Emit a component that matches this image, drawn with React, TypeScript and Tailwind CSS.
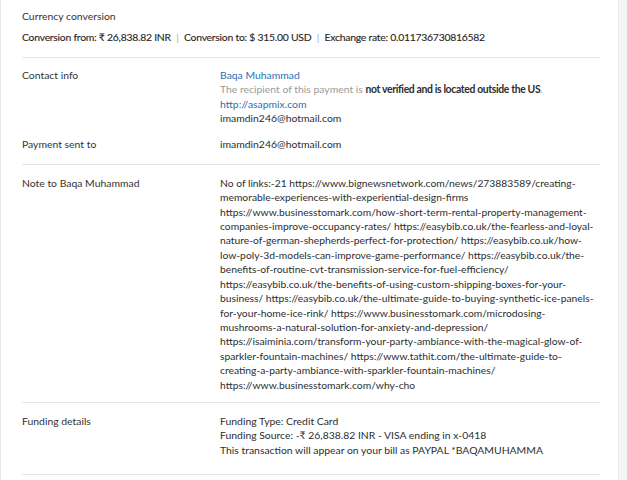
import React from "react";

const font = { fontFamily: "Lato, 'Noto Sans', sans-serif" };

function Divider() {
  return <div className="h-px bg-[#e5e5e5] mr-[18px]" />;
}

function Row({ label, children, className = "" }: { label: string; children: React.ReactNode; className?: string }) {
  return (
    <div className={`flex ${className}`}>
      <div className="w-[198px] shrink-0 text-[#333]">{label}</div>
      <div className="flex-1 text-[#2c2e2f]">{children}</div>
    </div>
  );
}

const noteLines = [
  "No of links:-21 https://www.bignewsnetwork.com/news/273883589/creating-",
  "memorable-experiences-with-experiential-design-firms",
  "https://www.businesstomark.com/how-short-term-rental-property-management-",
  "companies-improve-occupancy-rates/ https://easybib.co.uk/the-fearless-and-loyal-",
  "nature-of-german-shepherds-perfect-for-protection/ https://easybib.co.uk/how-",
  "low-poly-3d-models-can-improve-game-performance/ https://easybib.co.uk/the-",
  "benefits-of-routine-cvt-transmission-service-for-fuel-efficiency/",
  "https://easybib.co.uk/the-benefits-of-using-custom-shipping-boxes-for-your-",
  "business/ https://easybib.co.uk/the-ultimate-guide-to-buying-synthetic-ice-panels-",
  "for-your-home-ice-rink/ https://www.businesstomark.com/microdosing-",
  "mushrooms-a-natural-solution-for-anxiety-and-depression/",
  "https://isaiminia.com/transform-your-party-ambiance-with-the-magical-glow-of-",
  "sparkler-fountain-machines/ https://www.tathit.com/the-ultimate-guide-to-",
  "creating-a-party-ambiance-with-sparkler-fountain-machines/",
  "https://www.businesstomark.com/why-cho",
];

export default function App() {
  return (
    <div className="flex h-[480px] w-[627px] overflow-hidden bg-white text-[10.4px] leading-[14.4px]" style={font}>
      <div className="w-[619px] shrink-0 border-l border-r border-[#e8e8e8] pl-[21px]">
        <div className="pt-[9px] pb-[12px]">
          <div className="text-[#333]">Currency conversion</div>
          <div className="mt-[7px] tracking-[-0.25px] text-[#1f1f1f] [-webkit-text-stroke:0.12px_#1f1f1f]">
            Conversion from: ₹ 26,838.82 INR <span className="mx-[3px] text-[#aaa] [-webkit-text-stroke:0px]">|</span> Conversion to: $ 315.00 USD{" "}
            <span className="mx-[3px] text-[#aaa] [-webkit-text-stroke:0px]">|</span> Exchange rate: 0.011736730816582
          </div>
        </div>
        <Divider />
        <div className="pt-[10px] pb-[12px]">
          <Row label="Contact info">
            <div className="text-[#2c6fb3]">Baqa Muhammad</div>
            <div className="text-[#9a9a9a]">
              The recipient of this payment is{" "}
              <span className="font-bold tracking-[-0.35px] text-[#2c2e2f]">not verified and is located outside the US</span>.
            </div>
            <div className="text-[#2c6fb3]">http://asapmix.com</div>
            <div>imamdin246@hotmail.com</div>
          </Row>
          <Row label="Payment sent to" className="mt-[12px]">
            <div>imamdin246@hotmail.com</div>
          </Row>
        </div>
        <Divider />
        <div className="pt-[11px] pb-[10px]">
          <Row label="Note to Baqa Muhammad">
            <div className="text-[10.3px]">
              {noteLines.map((l, i) => (
                <div key={i} className="whitespace-nowrap">
                  {l}
                </div>
              ))}
            </div>
          </Row>
        </div>
        <Divider />
        <div className="pt-[11px] pb-[17px]">
          <Row label="Funding details">
            <div>Funding Type: Credit Card</div>
            <div>Funding Source: -₹ 26,838.82 INR - VISA ending in x-0418</div>
            <div>This transaction will appear on your bill as PAYPAL *BAQAMUHAMMA</div>
          </Row>
        </div>
        <Divider />
      </div>
      <div className="flex-1 bg-[#f5f5f5]" />
    </div>
  );
}
